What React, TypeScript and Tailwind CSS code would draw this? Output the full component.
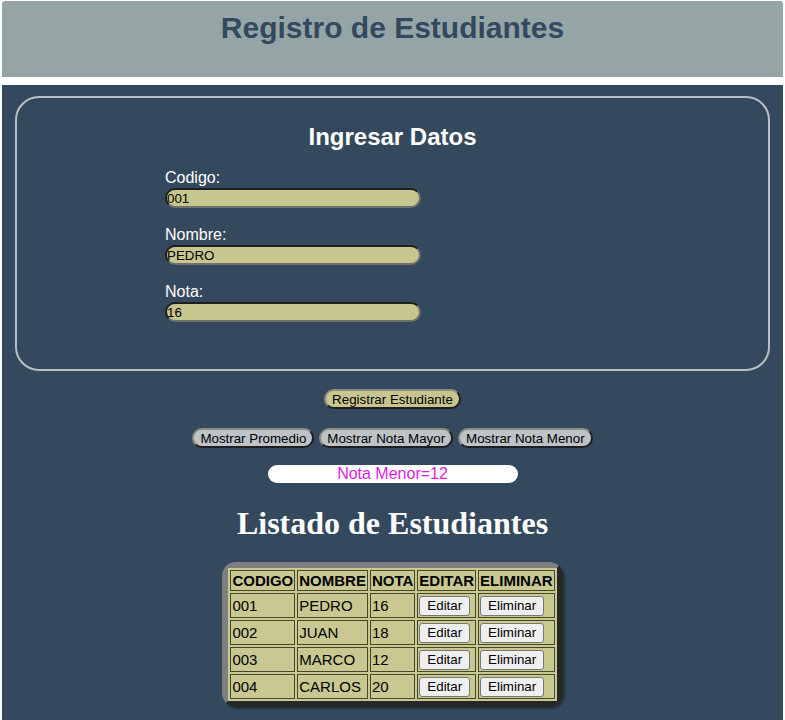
import React from "react";

const students = [
  { codigo: "001", nombre: "PEDRO", nota: "16" },
  { codigo: "002", nombre: "JUAN", nota: "18" },
  { codigo: "003", nombre: "MARCO", nota: "12" },
  { codigo: "004", nombre: "CARLOS", nota: "20" },
];

function Field({ label, value }: { label: string; value: string }) {
  return (
    <div className="flex flex-col">
      <label className="h-[18px] leading-[18px] text-[16px] text-white">{label}</label>
      <input
        readOnly
        value={value}
        className="mt-[1px] h-[20px] w-[256px] rounded-[10px] border-2 border-t-[#1e1e1e] border-l-[#1e1e1e] border-r-[#6f6f6f] border-b-[#6f6f6f] bg-[#c6c68e] px-0 text-[13.33px] leading-[16px] text-black outline-none font-['Liberation_Sans',Arial,sans-serif]"
      />
    </div>
  );
}

function PillButton({ children, bg }: { children: React.ReactNode; bg: string }) {
  return (
    <button
      className={`h-[20px] rounded-full border-2 border-t-[#8d8d80] border-l-[#8d8d80] border-r-[#1f1f1f] border-b-[#1f1f1f] px-[6px] text-[13.33px] leading-[15px] text-black ${bg}`}
    >
      {children}
    </button>
  );
}

function CellButton({ children }: { children: React.ReactNode }) {
  return (
    <button className="h-[20px] rounded-[3px] border border-[#767676] bg-[#efefef] px-[7px] text-[13.33px] leading-[15px] text-black">
      {children}
    </button>
  );
}

export default function App() {
  return (
    <div className="min-h-[720px] bg-white px-[2px] pt-[1px] font-['Liberation_Sans',Arial,sans-serif]">
      <header className="flex h-[76px] justify-center rounded-t-[3px] bg-[#95a5a6]">
        <h1 className="mt-[9px] text-[30px] font-bold leading-[36px] text-[#34495e]">
          Registro de Estudiantes
        </h1>
      </header>

      <main className="mt-[8px] min-h-[640px] bg-[#34495e] px-[13px] pt-[11px] pb-[12px]">
        <section className="h-[275px] rounded-[24px] border-2 border-[#b9c0c4]">
          <h2 className="mt-[25px] text-center text-[24px] font-bold leading-[28px] text-white">
            Ingresar Datos
          </h2>
          <div className="ml-[148px] mt-[18px] flex flex-col gap-[18px]">
            <Field label="Codigo:" value="001" />
            <Field label="Nombre:" value="PEDRO" />
            <Field label="Nota:" value="16" />
          </div>
        </section>

        <div className="mt-[18px] flex justify-center">
          <PillButton bg="bg-[#c6c68e]">Registrar Estudiante</PillButton>
        </div>

        <div className="mt-[19px] flex justify-center gap-[5px]">
          <PillButton bg="bg-[#bdc3c7]">Mostrar Promedio</PillButton>
          <PillButton bg="bg-[#bdc3c7]">Mostrar Nota Mayor</PillButton>
          <PillButton bg="bg-[#bdc3c7]">Mostrar Nota Menor</PillButton>
        </div>

        <div className="mt-[17px] flex justify-center">
          <div className="h-[18px] w-[250px] rounded-full bg-white text-center text-[16px] leading-[18px] text-[#e01ee0]">
            Nota Menor=12
          </div>
        </div>

        <h1 className="mt-[22px] text-center font-['Liberation_Serif','Times_New_Roman',serif] text-[32px] font-bold leading-[36px] text-white">
          Listado de Estudiantes
        </h1>

        <div className="mt-[21px] flex justify-center">
          <div className="rounded-[14px] border-[6px] border-t-[#7e7f80] border-l-[#7e7f80] border-r-[#262626] border-b-[#262626] bg-[#c8c890] shadow-[2px_2px_2px_rgba(0,0,0,0.35)]">
            <table className="border-separate border-spacing-[2px] bg-[#c8c890] text-[15px] text-black">
              <thead>
                <tr>
                  {["CODIGO", "NOMBRE", "NOTA", "EDITAR", "ELIMINAR"].map((h) => (
                    <th
                      key={h}
                      className="h-[21px] border border-[#47472a] px-[1px] text-center text-[15px] font-bold leading-[17px]"
                    >
                      {h}
                    </th>
                  ))}
                </tr>
              </thead>
              <tbody>
                {students.map((s) => (
                  <tr key={s.codigo}>
                    <td className="h-[25px] border border-[#47472a] px-[1px] text-left leading-[17px]">
                      {s.codigo}
                    </td>
                    <td className="h-[25px] border border-[#47472a] px-[1px] text-left leading-[17px]">
                      {s.nombre}
                    </td>
                    <td className="h-[25px] border border-[#47472a] px-[1px] text-left leading-[17px]">
                      {s.nota}
                    </td>
                    <td className="h-[25px] border border-[#47472a] px-[1px] text-left leading-[17px]">
                      <CellButton>Editar</CellButton>
                    </td>
                    <td className="h-[25px] border border-[#47472a] px-[1px] text-left leading-[17px]">
                      <CellButton>Eliminar</CellButton>
                    </td>
                  </tr>
                ))}
              </tbody>
            </table>
          </div>
        </div>
      </main>
    </div>
  );
}
